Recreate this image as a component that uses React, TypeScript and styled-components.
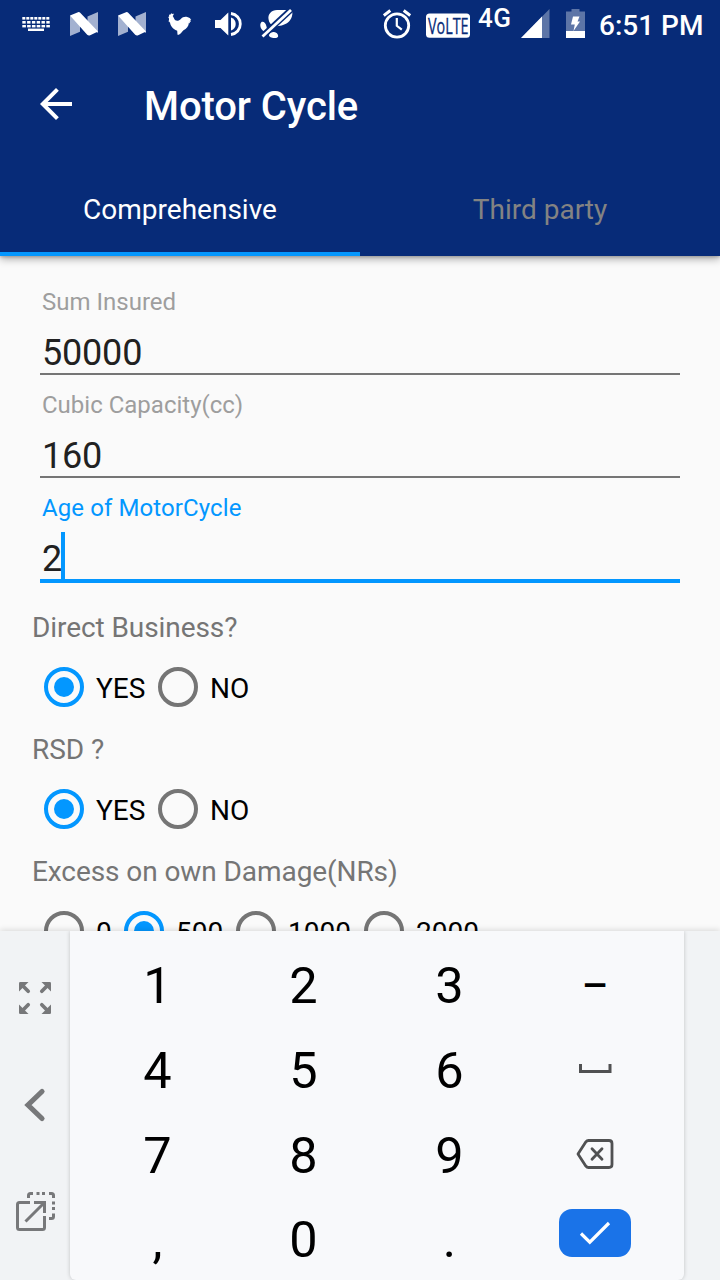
import React from "react";
import styled, { createGlobalStyle } from "styled-components";

const GlobalStyle = createGlobalStyle`
  * { box-sizing: border-box; }
  body {
    margin: 0;
    background: #fafafa;
    font-family: Roboto, "Liberation Sans", sans-serif;
    overflow: hidden;
  }
  svg { display: block; flex: none; }
`;

const Screen = styled.div`
  width: 720px;
  height: 1280px;
  display: flex;
  flex-direction: column;
  background: #fafafa;
  overflow: hidden;
`;

const Header = styled.header`
  flex: none;
  height: 256px;
  display: flex;
  flex-direction: column;
  position: relative;
  z-index: 1;
  background: #072b78;
  color: #fff;
  box-shadow: 0 3px 8px rgba(0, 0, 0, 0.32), 0 1px 3px rgba(0, 0, 0, 0.2);
`;

const StatusBar = styled.div`
  height: 48px;
  display: flex;
  padding-left: 12px;
`;

const Notifications = styled.div`
  display: flex;
  width: 371px;
`;

const SystemIcons = styled.div`
  display: flex;
`;

const Network = styled.div`
  width: 51px;
  padding-left: 8px;
  font-size: 26px;
  font-weight: 500;
  line-height: 36px;
  letter-spacing: 0.4px;
  white-space: nowrap;
`;

const Clock = styled.div`
  padding-left: 14px;
  font-size: 28px;
  font-weight: 500;
  line-height: 51px;
  white-space: nowrap;
`;

const Toolbar = styled.div`
  height: 112px;
  display: flex;
  align-items: center;
  padding-left: 32px;
`;

const Title = styled.h1`
  margin: 6px 0 0 64px;
  font-size: 40px;
  font-weight: 500;
  line-height: 48px;
  letter-spacing: -0.1px;
`;

const Tabs = styled.nav`
  height: 96px;
  display: flex;
`;

const Tab = styled.div<{ $active?: boolean }>`
  flex: 1;
  padding-top: 33px;
  text-align: center;
  font-size: 28px;
  line-height: 33px;
  color: ${(p) => (p.$active ? "#fff" : "#838383")};
  border-bottom: 4px solid ${(p) => (p.$active ? "#0397ff" : "transparent")};
`;

const Form = styled.main`
  flex: none;
  height: 675px;
  overflow: hidden;
  padding-top: 16px;
`;

const Field = styled.div<{ $focused?: boolean }>`
  position: relative;
  margin: 0 40px;
  height: ${(p) => (p.$focused ? 105 : 103)}px;
  padding: 16px 2px 0;
  border-bottom: ${(p) => (p.$focused ? "4px solid #0397ff" : "2px solid #757575")};
`;

const FieldLabel = styled.div<{ $focused?: boolean }>`
  font-size: 24px;
  line-height: 28px;
  letter-spacing: ${(p) => (p.$focused ? 0.1 : 0)}px;
  color: ${(p) => (p.$focused ? "#0397ff" : "#9e9e9e")};
`;

const FieldValue = styled.div`
  margin-top: 13px;
  height: 44px;
  font-size: 36px;
  line-height: 48px;
  letter-spacing: -0.2px;
  color: #212121;
`;

const Caret = styled.span`
  position: absolute;
  left: 21px;
  bottom: 0;
  width: 4px;
  height: 47px;
  background: #0397ff;
`;

const Groups = styled.div`
  padding: 28px 0 0 32px;
`;

const Group = styled.section`
  height: 122px;
`;

const Question = styled.div`
  font-size: 28px;
  line-height: 33px;
  letter-spacing: -0.08px;
  color: #757575;
`;

const Options = styled.div`
  display: flex;
  align-items: center;
  height: 64px;
  margin-top: 11px;
  padding-left: 12px;
`;

const Option = styled.div<{ $width: number }>`
  display: flex;
  align-items: center;
  gap: 12px;
  width: ${(p) => p.$width}px;
`;

const Ring = styled.span<{ $on?: boolean }>`
  flex: none;
  display: grid;
  place-items: center;
  width: 40px;
  height: 40px;
  border-radius: 50%;
  border: 4px solid ${(p) => (p.$on ? "#0397ff" : "#757575")};
  &::after {
    content: "";
    width: 20px;
    height: 20px;
    border-radius: 50%;
    background: ${(p) => (p.$on ? "#0397ff" : "transparent")};
  }
`;

const OptionText = styled.span`
  padding-top: 3px;
  font-size: 28px;
  line-height: 33px;
  color: #000;
`;

const Keyboard = styled.div`
  position: relative;
  flex: none;
  height: 349px;
  display: flex;
  background: #f1f3f5;
  box-shadow: 0 -1px 6px rgba(0, 0, 0, 0.14);
`;

const SideBar = styled.div`
  width: 70px;
  display: flex;
  flex-direction: column;
`;

const Keypad = styled.div`
  width: 614px;
  padding: 12px 16px 0 14px;
  display: grid;
  grid-template-columns: repeat(4, 146px);
  grid-auto-rows: 84.7px;
  background: #f8f9fb;
  border-radius: 0 0 6px 6px;
  box-shadow: 0 0 4px rgba(0, 0, 0, 0.2);
  clip-path: inset(0 -6px 0 -6px);
`;

const Key = styled.div<{ $glyph?: boolean }>`
  display: flex;
  justify-content: center;
  align-items: center;
  padding: ${(p) => (p.$glyph ? "2px 0 0 1px" : "0")};
  font-size: 50.5px;
  line-height: 84px;
  color: #000;
`;

const Dash = styled.span`
  font-size: 41px;
  font-weight: 500;
  line-height: 76px;
`;

const EnterKey = styled.div`
  display: grid;
  place-items: center;
  width: 72px;
  height: 48px;
  margin-bottom: 13px;
  border-radius: 13px;
  background: #1a73e8;
`;

const KeyboardIcon = () => (
  <svg width="48" height="48" fill="#fff">
    {[0, 1, 2, 3, 4, 5, 6].map((i) => (
      <rect key={i} x={10.3 + i * 4} y="17" width="3" height="2.6" />
    ))}
    {[0, 1, 2, 3, 4, 5].map((i) => (
      <rect key={i} x={10.3 + i * 4.8} y="21" width="3.4" height="2.6" />
    ))}
    {[0, 1, 2, 3, 4, 5].map((i) => (
      <rect key={i} x={10.3 + i * 4.8} y="25" width="3.6" height="2.4" />
    ))}
    <rect x="16" y="28.6" width="16" height="2.4" />
  </svg>
);

const NougatIcon = () => (
  <svg width="48" height="48">
    <path d="M10 15.500L20 21V31.700L10 36zM27.500 16.500L38 12v21l-10.500-6z" fill="#a3b1d0" />
    <path d="M10 15.500L18 12.200q1.200-.5 2.200.5L38 31.500l-7.800 3.800q-1.700.8-3-.5z" fill="#fff" />
  </svg>
);

const RoosterIcon = () => (
  <svg width="48" height="48" fill="#fff">
    <path d="M13 18.500l-.8-1.500 1-.4-.2-1.800 1.600-.2.500-1.300 1.300.6 1-.5.300 1.300-1 1.300c1.200 1.900 1.600 3.600 2.600 4.300 2 .8 4.100.2 5.500-1.400 1.600-1.800 4-2.600 6.400-2 2 .4 3.300 1.400 4.100 3.100l-1-.2.600 2.100-1.100-.4.100 1.900-1-.6c-.200 3.600-2.400 6-5.400 7.400l-1.600 1.800-1 1.200-2 1.600-1.400-.1-.3-3.900c-4.900-1.700-7.200-5.600-7.300-9.500l-.4 1.100c-1-.4-1-1.400-.5-2.300z" />
  </svg>
);

const VolumeIcon = () => (
  <svg width="48" height="48" fill="#fff">
    <path d="M11 20h5.500L24.300 12.500v23L16.500 28H11z" />
    <path d="M27 17.500c3 .9 4.700 3.400 4.700 6.500s-1.700 5.600-4.700 6.500z" />
    <path d="M27 13.500c5.500.7 9.300 5 9.300 10.500S32.500 33.800 27 34.500" fill="none" stroke="#fff" strokeWidth="2.800" />
  </svg>
);

const BlockedIcon = () => (
  <svg width="48" height="48">
    <g fill="#fff">
      <path d="M16.500 19c-.7-5 3-8.800 8.500-9h12.500c2.500 0 3.200 1.700 2.800 4.500-.8 5.500-4.200 9-9.300 10.500-2.500.8-6 1.800-9 .8-3-.8-5.200-3.300-5.500-6.800z" />
      <path d="M9.500 22c2.300-.8 4.300 1.500 5 4.500.8 3 .5 5-1 5.200C9.500 31.500 6.500 25 9.500 22z" />
      <path d="M17 35c.5-2 3-3.200 5-3 2.500.2 4 2 4.200 4-.2 1.800-2 2.200-4 2-2.500-.2-5.500-1-5.200-3z" />
    </g>
    <path d="M9 37.500L39.500 9.200" stroke="#072b78" strokeWidth="6" />
    <path d="M10.500 36.500L39 10" stroke="#fff" strokeWidth="2.800" />
  </svg>
);

const AlarmIcon = () => (
  <svg width="43" height="48" fill="none" stroke="#fff">
    <circle cx="14" cy="25.500" r="11.700" strokeWidth="2.800" />
    <path d="M.8 15.500l6.500-5M20.700 10.500l6.500 5" strokeWidth="3" />
    <path d="M13.800 18v7.800l5 3.800" strokeWidth="2.200" />
  </svg>
);

const VolteIcon = () => (
  <svg width="44" height="48">
    <rect y="13.500" width="44" height="24.300" rx="3.500" fill="#fff" />
    <text
      x="2"
      y="33.800"
      textLength="40.500"
      lengthAdjust="spacingAndGlyphs"
      fontFamily="'Open Sans', sans-serif"
      fontSize="22"
      fill="#072b78"
      stroke="#072b78"
      strokeWidth=".3"
    >
      VoLTE
    </text>
  </svg>
);

const SignalIcon = () => (
  <svg width="45" height="48" fill="#fff">
    <path d="M28.500 9v29H0z" opacity=".35" />
    <path d="M21 16.600V38H0z" />
  </svg>
);

const BatteryIcon = () => (
  <svg width="19" height="48" fill="#fff">
    <path d="M0 11.500h5.500V9h8v2.500H19V31H0z" opacity=".35" />
    <path d="M0 31h19v7H0z" />
    <path d="M7 16.500h6.500l-2 5H14L7.500 31l1.300-6.500H5z" />
  </svg>
);

const BackIcon = () => (
  <svg width="48" height="48" viewBox="0 0 24 24" fill="#fff">
    <path d="M20 11H7.830l5.590-5.590L12 4l-8 8 8 8 1.410-1.410L7.830 13H20v-2z" />
  </svg>
);

const ExpandArrow = () => (
  <>
    <path d="M1.300 0H9.500L0 9.500V1.300Q0 0 1.300 0z" />
    <path d="M3 3l6.200 6.200" stroke="#77787a" strokeWidth="3.700" strokeLinecap="round" />
  </>
);

const ResizeIcon = () => (
  <svg width="70" height="134" fill="#77787a">
    <g transform="translate(19 51)"><ExpandArrow /></g>
    <g transform="translate(51 51) scale(-1 1)"><ExpandArrow /></g>
    <g transform="translate(19 83) scale(1 -1)"><ExpandArrow /></g>
    <g transform="translate(51 83) scale(-1 -1)"><ExpandArrow /></g>
  </svg>
);

const ChevronIcon = () => (
  <svg width="70" height="80">
    <path d="M42 26.500L28 40l14 13.500" fill="none" stroke="#77787a" strokeWidth="5.200" strokeLinecap="round" />
  </svg>
);

const FloatIcon = () => (
  <svg width="70" height="135" fill="none" stroke="#77787a" strokeWidth="3">
    <path d="M30 57.500H19.500q-2 0-2 2v23q0 2 2 2h23q2 0 2-2V71" />
    <path d="M34 57.500h10.500V68M44 58L25.500 76.500" />
    <path d="M28.500 53v-2.500q0-2 2-2H33M36.500 48.500h3M42 48.500h3M49 48.500h2.500q2 0 2 2V53M53.500 56.500v3M53.500 62v3M53.500 68.500v3q0 2-2 2H49" />
  </svg>
);

const SpaceIcon = () => (
  <svg width="34" height="14" fill="none" stroke="#505152" strokeWidth="3">
    <path d="M2.500 1v7.500h29.500V1" />
  </svg>
);

const BackspaceIcon = () => (
  <svg width="38" height="32" fill="none" stroke="#505152" strokeWidth="2.800" strokeLinejoin="round" strokeLinecap="round">
    <path d="M12.500 1.500H33q3 0 3 3v21q0 3-3 3H12.500q-1.600 0-2.600-1.300L2 15l7.900-12.200q1-1.300 2.600-1.300z" />
    <path d="M16 9.800l10 10.400M26 9.800l-10 10.400" />
  </svg>
);

const CheckIcon = () => (
  <svg width="32" height="26" fill="none" stroke="#fff" strokeWidth="3.200">
    <path d="M2 13.500l8.800 8.700L30 3" />
  </svg>
);

const fields = [
  { label: "Sum Insured", value: "50000" },
  { label: "Cubic Capacity(cc)", value: "160" },
  { label: "Age of MotorCycle", value: "2", focused: true },
];

const yesNo = [
  { text: "YES", width: 114, on: true },
  { text: "NO", width: 114 },
];

const groups = [
  { question: "Direct Business?", options: yesNo },
  { question: "RSD ?", options: yesNo },
  {
    question: "Excess on own Damage(NRs)",
    options: [
      { text: "0", width: 80 },
      { text: "500", width: 112, on: true },
      { text: "1000", width: 128 },
      { text: "2000", width: 128 },
    ],
  },
];

const keys: React.ReactNode[] = [
  "1", "2", "3", <Dash>–</Dash>,
  "4", "5", "6", <SpaceIcon />,
  "7", "8", "9", <BackspaceIcon />,
  ",", "0", ".", <EnterKey><CheckIcon /></EnterKey>,
];

export default function App() {
  return (
    <>
      <GlobalStyle />
      <Screen>
        <Header>
          <StatusBar>
            <Notifications>
              <KeyboardIcon />
              <NougatIcon />
              <NougatIcon />
              <RoosterIcon />
              <VolumeIcon />
              <BlockedIcon />
            </Notifications>
            <SystemIcons>
              <AlarmIcon />
              <VolteIcon />
              <Network>4G</Network>
              <SignalIcon />
              <BatteryIcon />
              <Clock>6:51 PM</Clock>
            </SystemIcons>
          </StatusBar>
          <Toolbar>
            <BackIcon />
            <Title>Motor Cycle</Title>
          </Toolbar>
          <Tabs>
            <Tab $active>Comprehensive</Tab>
            <Tab>Third party</Tab>
          </Tabs>
        </Header>
        <Form>
          {fields.map((f) => (
            <Field key={f.label} $focused={f.focused}>
              <FieldLabel $focused={f.focused}>{f.label}</FieldLabel>
              <FieldValue>{f.value}</FieldValue>
              {f.focused && <Caret />}
            </Field>
          ))}
          <Groups>
            {groups.map((g) => (
              <Group key={g.question}>
                <Question>{g.question}</Question>
                <Options>
                  {g.options.map((o) => (
                    <Option key={o.text} $width={o.width}>
                      <Ring $on={"on" in o && o.on} />
                      <OptionText>{o.text}</OptionText>
                    </Option>
                  ))}
                </Options>
              </Group>
            ))}
          </Groups>
        </Form>
        <Keyboard>
          <SideBar>
            <ResizeIcon />
            <ChevronIcon />
            <FloatIcon />
          </SideBar>
          <Keypad>
            {keys.map((k, i) => (
              <Key key={i} $glyph={typeof k === "string"}>{k}</Key>
            ))}
          </Keypad>
        </Keyboard>
      </Screen>
    </>
  );
}
